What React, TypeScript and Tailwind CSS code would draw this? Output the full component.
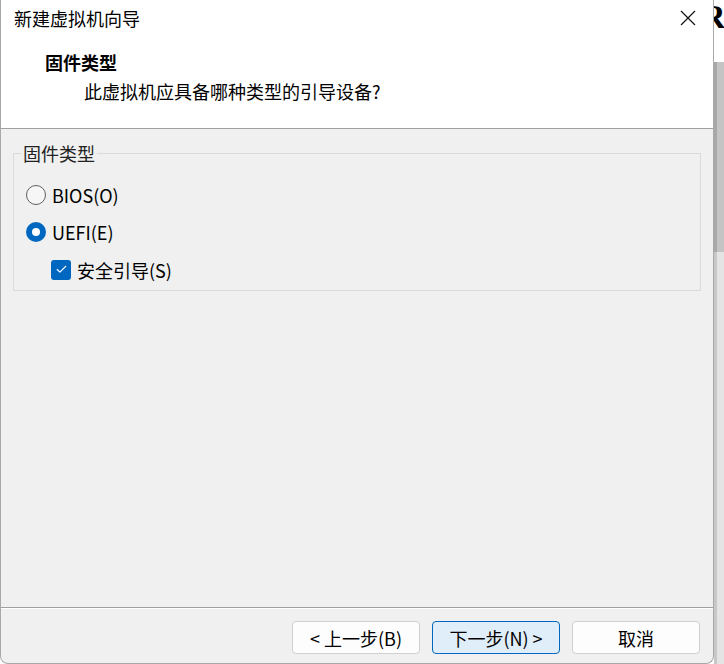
import { Check } from "lucide-react";

const font = { fontFamily: '"Noto Sans CJK SC", "Noto Sans", sans-serif' };

function Radio({ checked, label }: { checked: boolean; label: string }) {
  return (
    <div className="flex h-[37px] items-center gap-[6px]">
      {checked ? (
        <span className="flex h-[20px] w-[20px] items-center justify-center rounded-full bg-[#0067c0]">
          <span className="h-[8px] w-[8px] rounded-full bg-white" />
        </span>
      ) : (
        <span className="h-[20px] w-[20px] rounded-full border border-[#5f5f5f] bg-[#f6f6f6]" />
      )}
      <span className="text-[18px] leading-[22px] text-black">{label}</span>
    </div>
  );
}

function Button({ label, primary }: { label: string; primary?: boolean }) {
  return (
    <button
      className={
        "h-[33px] w-[128px] rounded-[4px] border text-[18px] leading-[22px] text-black " +
        (primary ? "border-[#0067c0] bg-[#e0eef9]" : "border-[#d0d0d0] bg-[#fdfdfd]")
      }
    >
      {label}
    </button>
  );
}

export default function App() {
  return (
    <div className="flex h-[664px] w-[724px] overflow-hidden bg-white" style={font}>
      <div className="flex h-[664px] w-[714px] shrink-0 flex-col rounded-b-[8px] border-x border-b border-[#a8a8a8] bg-[#f0f0f0]">
        {/* header */}
        <div className="h-[129px] border-b border-[#a0a0a0] bg-white">
          <div className="flex h-[36px] items-center justify-between pl-[13px] pr-[17px]">
            <span className="text-[18px] leading-[22px] text-black">新建虚拟机向导</span>
            <svg width="16" height="16" viewBox="0 0 16 16" className="mt-[-1px]">
              <path d="M1 1 L15 15 M15 1 L1 15" stroke="#111" strokeWidth="1.2" fill="none" />
            </svg>
          </div>
          <div className="mt-[15px] pl-[44px] text-[18px] font-bold leading-[22px] text-black">固件类型</div>
          <div className="mt-[7px] pl-[83px] text-[18px] leading-[22px] text-black">
            此虚拟机应具备哪种类型的引导设备?
          </div>
        </div>

        {/* content */}
        <div className="px-[12px] pt-[13px]">
          <fieldset className="h-[149px] border border-[#dadada] px-[7px] pb-0">
            <legend className="px-[2px] text-[18px] leading-[22px] text-[#222]">固件类型</legend>
            <div className="pl-[5px] pt-[12px]">
              <Radio checked={false} label="BIOS(O)" />
              <Radio checked label="UEFI(E)" />
              <div className="flex h-[39px] items-center gap-[6px] pl-[25px]">
                <span className="flex h-[20px] w-[20px] items-center justify-center rounded-[3px] bg-[#0067c0]">
                  <Check size={13} color="#fff" strokeWidth={2} />
                </span>
                <span className="text-[18px] leading-[22px] text-black">安全引导(S)</span>
              </div>
            </div>
          </fieldset>
        </div>

        <div className="flex-1" />

        {/* footer */}
        <div className="border-t border-[#a0a0a0]">
          <div className="flex h-[55px] items-start justify-end gap-[12px] border-t border-white pr-[13px] pt-[12px]">
            <Button label="< 上一步(B)" />
            <Button label="下一步(N) >" primary />
            <Button label="取消" />
          </div>
        </div>
      </div>

      {/* background strip to the right */}
      <div className="flex w-[10px] flex-col">
        <div className="h-[62px] overflow-hidden bg-white">
          <span
            className="ml-[-13px] block text-[34px] font-bold leading-[34px] text-black"
            style={{ fontFamily: '"Liberation Serif", serif' }}
          >
            R
          </span>
        </div>
        <div className="h-[190px] border-l-[3px] border-[#a8a8a8] bg-[#c4c4c4]" />
        <div className="flex-1 border-l-[3px] border-[#c8c8c8] bg-[#e4e4e4]" />
      </div>
    </div>
  );
}
